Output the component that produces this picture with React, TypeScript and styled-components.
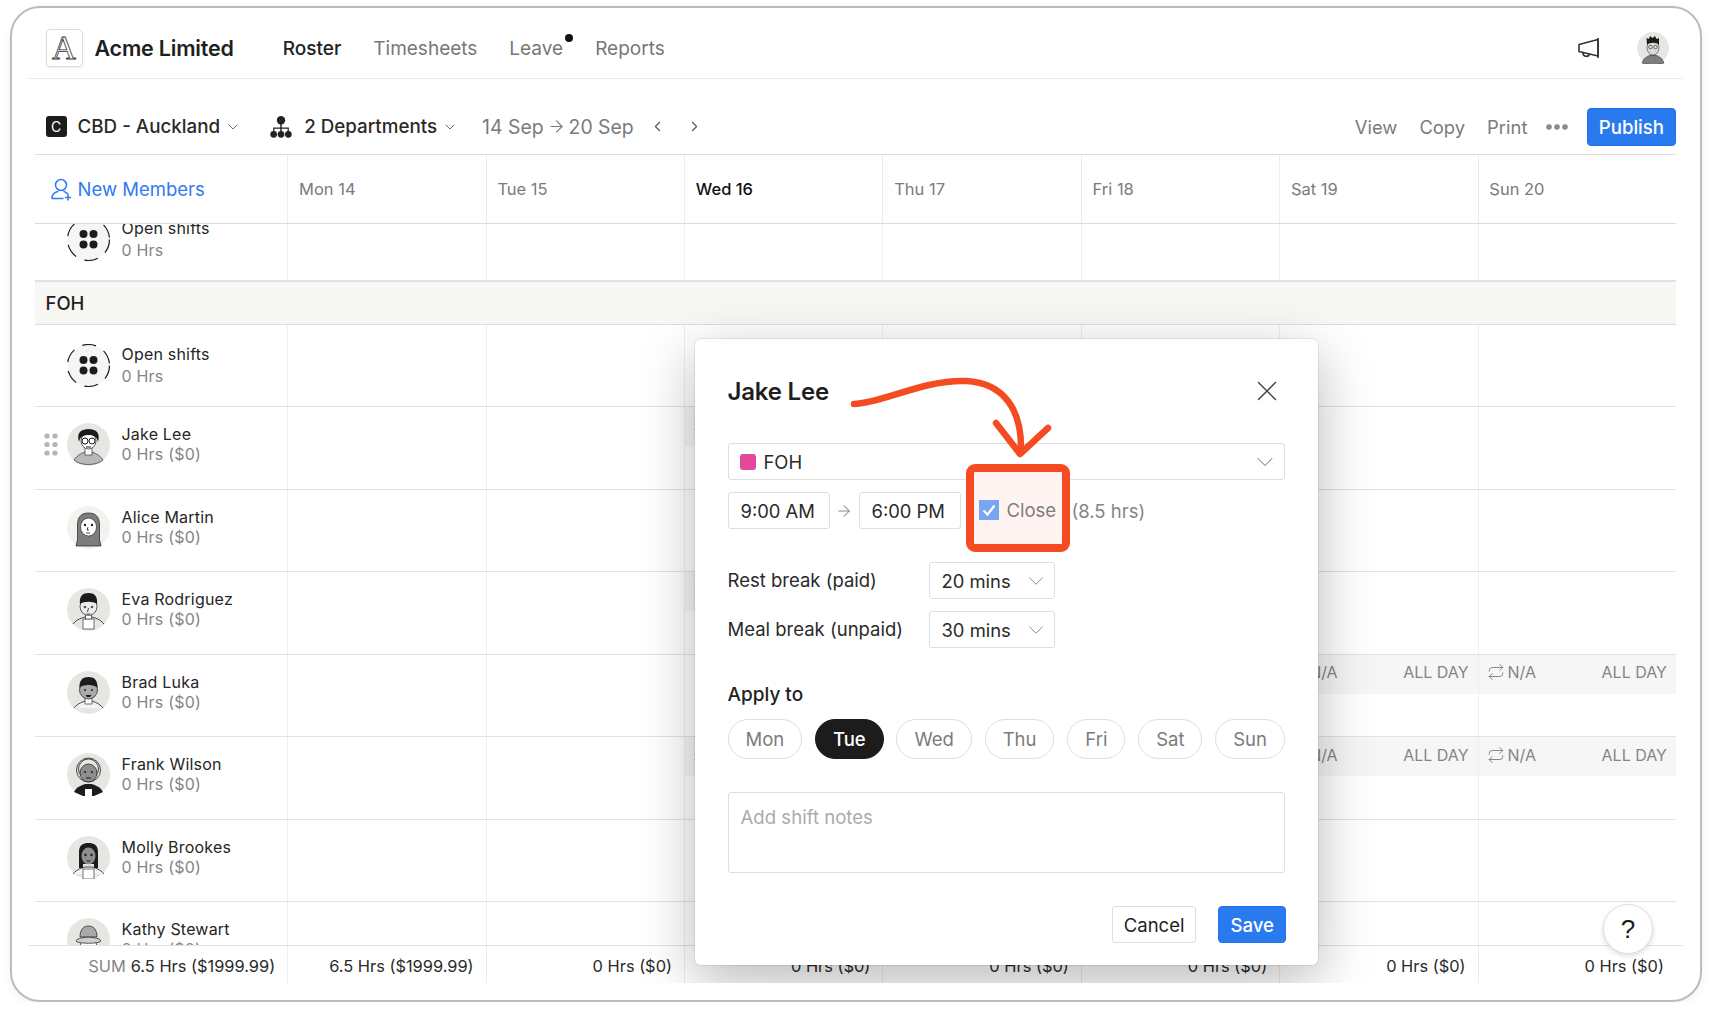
import React from 'react';
import styled, { createGlobalStyle } from 'styled-components';
import { ArrowRight, ChevronDown, ChevronLeft, ChevronRight, Repeat, X } from 'lucide-react';

const GLOBAL = createGlobalStyle`
  html, body { margin: 0; padding: 0; background: #fff; }
  body {
    font-family: Inter, "Liberation Sans", sans-serif;
    color: #1f1f1f;
    -webkit-font-smoothing: antialiased;
  }
  * { box-sizing: border-box; }
`;

const FIRST_COL = '252.7px';
const DAY_COL = '198.4px';

const FRAME = styled.div`
  position: relative;
  margin: 6px 0 0 10px;
  width: 1692px;
  height: 996px;
  border: 2.5px solid #bcbcbc;
  border-radius: 30px;
  background: #fff;
  box-shadow: 0 2px 8px rgba(0, 0, 0, 0.06);
`;
const VIEWPORT = styled.div`
  position: relative;
  display: flex;
  flex-direction: column;
  height: 975px;
  overflow: hidden;
  border-radius: 28px 28px 0 0;
`;
const HEADER = styled.header`
  flex: none;
  display: flex;
  align-items: center;
  height: 71px;
  margin: 0 17px 0 15.5px;
  padding: 10.5px 0 0 18px;
  border-bottom: 1px solid #ececec;
`;
const LOGO = styled.div`
  width: 37px;
  height: 38px;
  display: flex;
  align-items: center;
  justify-content: center;
  border: 1px solid #dcdcdc;
  border-radius: 4px;
  box-shadow: 0 1px 2px rgba(0, 0, 0, 0.08);
  font-family: "Liberation Serif", serif;
  font-size: 33px;
  color: #fff;
  -webkit-text-stroke: 0.8px #333;
`;
const BRAND = styled.div`
  margin-left: 12px;
  font-size: 21.5px;
  font-weight: 600;
  letter-spacing: -0.2px;
`;
const NAV = styled.nav`
  display: flex;
  gap: 32px;
  margin-left: 49px;
`;
const NAV_ITEM = styled.span<{ $active?: boolean }>`
  position: relative;
  font-size: 19px;
  font-weight: ${(p) => (p.$active ? 500 : 400)};
  color: ${(p) => (p.$active ? '#222' : '#777')};
`;
const NAV_DOT = styled.i`
  position: absolute;
  top: -3px;
  right: -10px;
  width: 8px;
  height: 8px;
  border-radius: 50%;
  background: #111;
`;
const HEADER_RIGHT = styled.div`
  margin-left: auto;
  display: flex;
  align-items: center;
  gap: 37px;
  padding-right: 14px;
`;
const ICON_SVG = styled.svg`
  display: block;
  flex: none;
`;

const TOOLBAR = styled.div`
  flex: none;
  display: flex;
  align-items: center;
  height: 75px;
  margin: 0 24px 0 22.5px;
  padding: 20px 0 0 11px;
`;
const TOOL_GROUP = styled.div<{ $gap?: number }>`
  display: flex;
  align-items: center;
  margin-left: ${(p) => p.$gap ?? 0}px;
`;
const LOCATION_BADGE = styled.span`
  width: 21px;
  height: 21px;
  margin-right: 11px;
  border-radius: 3px;
  background: #1c1c1c;
  color: #fff;
  font-size: 14px;
  display: flex;
  align-items: center;
  justify-content: center;
`;
const TOOL_LABEL = styled.span<{ $gap?: number }>`
  margin-left: ${(p) => p.$gap ?? 0}px;
  font-size: 18.8px;
  font-weight: 500;
  color: #2a2a2a;
`;
const TOOL_CHEVRON = styled(ChevronDown)`
  margin-left: 5px;
  color: #555;
`;
const PAGE_PREV = styled(ChevronLeft)`
  margin-left: 15px;
  color: #555;
`;
const PAGE_NEXT = styled(ChevronRight)`
  margin-left: 20px;
  color: #555;
`;
const DATE_LABEL = styled.span`
  display: flex;
  align-items: center;
  gap: 3px;
  font-size: 19.4px;
  color: #7b7b7b;
`;
const TOOL_LINK = styled.span`
  font-size: 18.4px;
  color: #7b7b7b;
`;
const TOOL_RIGHT = styled.div`
  margin-left: auto;
  display: flex;
  align-items: center;
  gap: 22px;
`;
const MORE_SLOT = styled.span`
  margin: 0 -3.3px;
`;
const PRIMARY_BUTTON = styled.button`
  height: 38px;
  padding: 0 11px;
  border: 1px solid #2271e8;
  border-radius: 4px;
  background: #2a7aef;
  color: #fff;
  font-family: inherit;
  font-size: 18.6px;
  font-weight: 500;
`;

const GRID_ROW = styled.div`
  display: grid;
  grid-template-columns: ${FIRST_COL} repeat(7, ${DAY_COL});
`;
const HEAD_ROW = styled(GRID_ROW)`
  flex: none;
  height: 70px;
  margin: 0 24px 0 22.5px;
  border-top: 1.5px solid #dcdcdc;
  border-bottom: 1.5px solid #dcdcdc;
`;
const NEW_MEMBERS = styled.div`
  display: flex;
  align-items: center;
  gap: 6px;
  padding-left: 16px;
  color: #2f7bf0;
  font-size: 18.5px;
`;
const DAY_HEAD = styled.div<{ $today?: boolean }>`
  display: flex;
  align-items: center;
  padding-left: 10.8px;
  border-left: 1px solid #ececec;
  font-size: 16.5px;
  font-weight: ${(p) => (p.$today ? 500 : 400)};
  color: ${(p) => (p.$today ? '#111' : '#7b7b7b')};
`;
const SCROLLER = styled.div`
  flex: 1;
  min-height: 0;
  overflow: hidden;
  margin: 0 24px 0 22.5px;
`;
const ROW = styled(GRID_ROW)<{ $clipped?: boolean }>`
  height: 82.5px;
  margin-top: ${(p) => (p.$clipped ? '-25.5px' : 0)};
  border-bottom: 1px solid #e2e2e2;
`;
const SECTION = styled.div`
  height: 43.5px;
  display: flex;
  align-items: center;
  padding: 1px 0 0 11px;
  background: #f7f7f3;
  border-top: 1px solid #e0e0dc;
  border-bottom: 1.5px solid #dcdcd8;
  font-size: 18.5px;
  font-weight: 500;
`;
const MEMBER = styled.div<{ $raised?: boolean }>`
  display: flex;
  align-items: center;
  padding-bottom: ${(p) => (p.$raised ? '6.5px' : 0)};
`;
const HANDLE_SLOT = styled.div`
  width: 32px;
  padding-left: 9px;
`;
const MEMBER_TEXT = styled.div<{ $open?: boolean }>`
  margin-left: 12px;
  display: flex;
  flex-direction: column;
  gap: ${(p) => (p.$open ? '3px' : '1px')};
`;
const MEMBER_NAME = styled.span`
  font-size: 16px;
  line-height: 19px;
  letter-spacing: 0.2px;
  color: #262626;
`;
const MEMBER_SUB = styled.span`
  font-size: 16px;
  line-height: 19px;
  letter-spacing: 0.2px;
  color: #858585;
`;
const DAY_CELL = styled.div`
  border-left: 1px solid #efefef;
`;
const SHIFT_BAND = styled.div`
  height: 39px;
  display: flex;
  align-items: center;
  gap: 3px;
  padding: 0 9px 4px 8px;
  background: #f6f6f6;
  font-size: 16px;
  color: #858585;
`;
const SHIFT_RIGHT = styled.span`
  margin-left: auto;
`;
const FOOTER = styled.div`
  flex: none;
  display: grid;
  grid-template-columns: 259.7px repeat(7, ${DAY_COL});
  height: 38.5px;
  margin: 0 17px 0 15.5px;
  border-top: 1px solid #e2e2e2;
`;
const FOOT_CELL = styled.div<{ $first?: boolean }>`
  display: flex;
  align-items: center;
  justify-content: flex-end;
  gap: 5px;
  padding: 3px 12px 0 0;
  border-left: ${(p) => (p.$first ? 'none' : '1px solid #ececec')};
  font-size: 16.4px;
  color: #2a2a2a;
`;
const SUM_LABEL = styled.span`
  color: #858585;
`;
const HELP_BUTTON = styled.button`
  position: absolute;
  left: 1591px;
  top: 896px;
  width: 50px;
  height: 50px;
  border: 1px solid #dedede;
  border-radius: 50%;
  background: #fff;
  box-shadow: 0 2px 5px rgba(0, 0, 0, 0.14);
  font-family: "Liberation Sans", sans-serif;
  font-size: 26px;
  color: #1a1a1a;
`;

const MODAL = styled.section`
  position: absolute;
  left: 682.5px;
  top: 331px;
  width: 623.5px;
  height: 626px;
  padding: 36px 33px 22px;
  border-radius: 6px;
  background: #fff;
  box-shadow: 0 0 0 1px rgba(0, 0, 0, 0.07), 0 16px 55px rgba(0, 0, 0, 0.28);
`;
const MODAL_HEAD = styled.div`
  display: flex;
  align-items: center;
  justify-content: space-between;
  height: 32px;
  padding-right: 1px;
`;
const MODAL_TITLE = styled.h2`
  margin: 0;
  font-size: 24px;
  font-weight: 600;
  letter-spacing: -0.2px;
  color: #1e1e1e;
`;
const FIELD = styled.div<{ $width?: number }>`
  display: flex;
  align-items: center;
  justify-content: space-between;
  width: ${(p) => (p.$width ? `${p.$width}px` : '100%')};
  height: 37px;
  padding: 0 12px;
  border: 1.5px solid #dedede;
  border-radius: 3px;
  background: #fff;
  font-size: 18.4px;
  color: #2a2a2a;
`;
const FIELD_CHEVRON = styled(ChevronDown)`
  margin-right: -7px;
  color: #888;
`;
const DEPT_FIELD = styled(FIELD)`
  margin-top: 36px;
`;
const DEPT_NAME = styled.span`
  display: flex;
  align-items: center;
  gap: 8px;
  margin-left: -1px;
`;
const SWATCH = styled.i`
  width: 16px;
  height: 16px;
  border-radius: 3px;
  background: #e4489b;
`;
const TIME_ROW = styled.div`
  display: flex;
  align-items: center;
  margin-top: 12px;
`;
const TIME_ARROW = styled.span`
  width: 29px;
  display: flex;
  justify-content: center;
  color: #8a8a8a;
`;
const DURATION = styled.span`
  margin-left: 111px;
  font-size: 18.5px;
  color: #858585;
`;
const HIGHLIGHT = styled.div`
  position: absolute;
  left: 271px;
  top: 125px;
  width: 104px;
  height: 88px;
  display: flex;
  align-items: center;
  gap: 8px;
  padding: 4px 5px 0 5px;
  border: 8px solid #f44b22;
  border-radius: 9px;
  background: #fff4f2;
  font-size: 18.5px;
  color: #7d7d7d;
`;
const CHECK_BOX = styled.span`
  flex: none;
  width: 20px;
  height: 20px;
  display: flex;
  align-items: center;
  justify-content: center;
  background: #7aa5ef;
`;
const SCRIBBLE = styled.svg`
  position: absolute;
  left: 150px;
  top: 32px;
  width: 215px;
  height: 95px;
  pointer-events: none;
`;
const BREAK_ROWS = styled.div`
  display: grid;
  grid-template-columns: 201px 126px;
  row-gap: 12px;
  align-items: center;
  margin-top: 33px;
`;
const BREAK_LABEL = styled.span`
  padding-bottom: 2px;
  font-size: 18.5px;
  color: #2a2a2a;
`;
const APPLY_LABEL = styled.div`
  margin-top: 35px;
  font-size: 19px;
  font-weight: 500;
  line-height: 24px;
  color: #222;
`;
const PILLS = styled.div`
  display: flex;
  justify-content: space-between;
  margin-top: 12px;
`;
const PILL = styled.button<{ $active?: boolean }>`
  height: 40px;
  padding: 0 17px;
  border: 1.5px solid ${(p) => (p.$active ? '#1c1c1c' : '#dedede')};
  border-radius: 20px;
  background: ${(p) => (p.$active ? '#1c1c1c' : '#fff')};
  color: ${(p) => (p.$active ? '#fff' : '#7b7b7b')};
  font-family: inherit;
  font-size: 18.5px;
  font-weight: ${(p) => (p.$active ? 500 : 400)};
`;
const NOTES = styled.div`
  height: 81px;
  margin-top: 33px;
  padding: 13px 12px;
  border: 1.5px solid #dedede;
  border-radius: 3px;
  font-size: 18.6px;
  color: #ababab;
`;
const ACTIONS = styled.div`
  display: flex;
  justify-content: flex-end;
  gap: 22px;
  margin: 33px -1px 0 0;
`;
const CANCEL_BUTTON = styled.button`
  height: 37px;
  padding: 0 11px;
  border: 1.5px solid #dedede;
  border-radius: 3px;
  background: #fff;
  color: #222;
  font-family: inherit;
  font-size: 18.5px;
`;
const SAVE_BUTTON = styled(PRIMARY_BUTTON)`
  height: 37px;
`;

const INK = '#1c1c1c';

function OpenAvatar() {
  return (
    <ICON_SVG width="43" height="43" viewBox="0 0 43 43">
      <circle cx="21.5" cy="21.5" r="21" fill="#f5f5f3" stroke={INK} strokeWidth="1.2" strokeDasharray="14 9" />
      <circle cx="16.5" cy="16" r="4" fill={INK} />
      <circle cx="26.5" cy="16" r="4" fill={INK} />
      <circle cx="16.5" cy="26.5" r="4" fill={INK} />
      <circle cx="26.5" cy="26.5" r="4" fill={INK} />
    </ICON_SVG>
  );
}

// hand drawn portraits, one per member
const PORTRAITS: Record<string, React.ReactNode> = {
  jake: (
    <>
      <path d="M7 37C11 31 16 30 18 29H25C27 30 32 31 36 37C30 43 13 43 7 37Z" fill="#b9b9b9" stroke={INK} strokeWidth=".6" />
      <rect x="18" y="24" width="7" height="8" fill="#fff" stroke={INK} strokeWidth=".6" />
      <ellipse cx="21.5" cy="18" rx="7.5" ry="8" fill="#fff" stroke={INK} strokeWidth=".7" />
      <path d="M12 19C9 9 15 6 21.5 6C28 6 34 9 31 19C30 14 27 12 21.5 12C16 12 13 14 12 19Z" fill={INK} />
      <circle cx="18" cy="18" r="3" fill="#fff" stroke={INK} />
      <circle cx="25" cy="18" r="3" fill="#fff" stroke={INK} />
      <path d="M19 24H24" stroke={INK} />
    </>
  ),
  alice: (
    <>
      <path d="M9 40L10.5 34V19C10.5 10 15 7 21.5 7C28 7 32.5 10 32.5 19V34L34 40Z" fill="#7d7d7d" stroke={INK} strokeWidth=".7" />
      <ellipse cx="21.5" cy="21" rx="8" ry="9" fill="#fff" stroke={INK} strokeWidth=".6" />
      <circle cx="18" cy="19" r="1.2" fill={INK} />
      <circle cx="25" cy="19" r="1.2" fill={INK} />
      <path d="M21 21L20 24H22M19 27H23" fill="none" stroke={INK} strokeWidth=".8" />
    </>
  ),
  eva: (
    <>
      <path d="M6 36C10 31 15 30 18 29H25C28 30 33 31 37 36" fill="none" stroke={INK} strokeWidth=".8" />
      <rect x="16" y="31" width="11" height="10" fill="#fff" stroke={INK} strokeWidth=".6" />
      <rect x="18.5" y="24" width="6" height="7" fill="#fff" stroke={INK} strokeWidth=".6" />
      <ellipse cx="21.5" cy="18.5" rx="8.5" ry="9" fill="#ededed" stroke={INK} strokeWidth=".7" />
      <path d="M13 16C12 8 16 5 21.5 5C27 5 31 8 30 16C26 13 17 13 13 16Z" fill={INK} />
      <circle cx="18" cy="19" r="1.3" fill="#555" />
      <circle cx="25" cy="19" r="1.3" fill="#555" />
      <path d="M21.5 20L20.5 24M19.5 26H23.5" stroke={INK} strokeWidth=".8" />
    </>
  ),
  brad: (
    <>
      <path d="M7 37C11 32 16 31 18 30H25C27 31 32 32 36 37" fill="#f4f4f4" stroke={INK} strokeWidth=".8" />
      <rect x="18" y="25" width="7" height="8" fill="#fff" stroke={INK} strokeWidth=".6" />
      <ellipse cx="21.5" cy="19" rx="9" ry="9" fill="#a9a9a9" stroke={INK} strokeWidth=".7" />
      <path d="M12.5 17C12 9 16 6 21.5 6C27 6 31 9 30.5 17C28 13 15 13 12.5 17Z" fill={INK} />
      <circle cx="18" cy="19" r="1" fill={INK} />
      <circle cx="25" cy="19" r="1" fill={INK} />
      <path d="M18.5 24H24.5L23 26H20Z" fill={INK} />
    </>
  ),
  frank: (
    <>
      <path d="M7 39C10 33 16 32 18 31H25C27 32 33 33 36 39L27 43H16Z" fill={INK} />
      <rect x="18" y="36" width="7" height="7" fill="#fff" />
      <circle cx="21.5" cy="17" r="12" fill="#e6e6e2" stroke={INK} strokeWidth=".8" />
      <circle cx="21.5" cy="16" r="10" fill="none" stroke={INK} strokeWidth=".8" />
      <ellipse cx="21.5" cy="20" rx="8.5" ry="9" fill="#8e8e8e" stroke={INK} strokeWidth=".7" />
      <circle cx="18" cy="19" r="1" fill={INK} />
      <circle cx="25" cy="19" r="1" fill={INK} />
      <path d="M19 25H24" stroke={INK} />
    </>
  ),
  molly: (
    <>
      <path d="M6 38C10 33 15 32 18 31H25C28 32 33 33 37 38" fill="#f4f4f4" stroke={INK} strokeWidth=".8" />
      <rect x="16" y="33" width="11" height="10" fill="#fff" stroke={INK} strokeWidth=".6" />
      <path d="M12 32V16C12 9 16 7 21.5 7C27 7 31 9 31 16V32H27V28H16V32Z" fill={INK} />
      <ellipse cx="21.5" cy="20" rx="7" ry="8.5" fill="#8e8e8e" />
      <circle cx="18.5" cy="19" r="1.2" fill={INK} />
      <circle cx="24.5" cy="19" r="1.2" fill={INK} />
      <path d="M19.5 25H23.5" stroke={INK} />
    </>
  ),
  kathy: (
    <>
      <ellipse cx="21.5" cy="27" rx="8" ry="9" fill="#fff" stroke={INK} strokeWidth=".7" />
      <path d="M13 19C13 11 17 8 21.5 8C26 8 30 11 30 19Z" fill="#a9a9a9" stroke={INK} strokeWidth=".7" />
      <path d="M9 23C10 18 33 18 34 23C33 26 10 26 9 23Z" fill="#cfcfcf" stroke={INK} strokeWidth=".7" />
      <circle cx="18" cy="29" r="1.4" fill={INK} />
      <circle cx="25" cy="29" r="1.4" fill={INK} />
    </>
  ),
};

const MEMBERS = [
  { key: 'jake', name: 'Jake Lee', handle: true, band: [2], strip: [2] },
  { key: 'alice', name: 'Alice Martin', handle: false, band: [], strip: [] },
  { key: 'eva', name: 'Eva Rodriguez', handle: false, band: [2], strip: [2] },
  { key: 'brad', name: 'Brad Luka', handle: false, band: [5, 6], strip: [] },
  { key: 'frank', name: 'Frank Wilson', handle: false, band: [2, 5, 6], strip: [2] },
  { key: 'molly', name: 'Molly Brookes', handle: false, band: [], strip: [] },
  { key: 'kathy', name: 'Kathy Stewart', handle: false, band: [], strip: [] },
];
const DAYS = ['Mon 14', 'Tue 15', 'Wed 16', 'Thu 17', 'Fri 18', 'Sat 19', 'Sun 20'];
const PILL_DAYS = ['Mon', 'Tue', 'Wed', 'Thu', 'Fri', 'Sat', 'Sun'];
const FOOT_TOTALS = ['6.5 Hrs ($1999.99)', '0 Hrs ($0)', '0 Hrs ($0)', '0 Hrs ($0)', '0 Hrs ($0)', '0 Hrs ($0)', '0 Hrs ($0)'];

function Portrait({ who }: { who: string }) {
  return (
    <ICON_SVG width="43" height="43" viewBox="0 0 43 43" style={{ overflow: 'hidden' }}>
      <circle cx="21.5" cy="21.5" r="21.5" fill={who === 'alice' ? '#f2f2ee' : '#e6e6e2'} />
      {PORTRAITS[who]}
    </ICON_SVG>
  );
}

function DragDots() {
  return (
    <ICON_SVG width="14" height="23" viewBox="0 0 14 23" fill="#b4b4b4">
      {[3, 11.5, 20].map((y) => (
        <React.Fragment key={y}>
          <circle cx="3" cy={y} r="2.6" />
          <circle cx="11" cy={y} r="2.6" />
        </React.Fragment>
      ))}
    </ICON_SVG>
  );
}

function Megaphone() {
  return (
    <ICON_SVG width="24" height="24" viewBox="0 0 24 24" fill="none" stroke="#333" strokeWidth="1.6" strokeLinejoin="round">
      <path d="M3 8.5V15.5L22 20V3.5Z" />
      <path d="M22 2V22M7 17C7 21 12.5 21.5 13.5 18" />
    </ICON_SVG>
  );
}

function DepartmentIcon() {
  return (
    <ICON_SVG width="22" height="22" viewBox="0 0 21 21" fill="#222">
      <circle cx="10.5" cy="4" r="4" />
      <path d="M9.8 7H11.2V11H18V15H16.8V12.2H11.2V15H9.8V12.2H4.2V15H3V11H9.8Z" />
      <circle cx="3.5" cy="17.5" r="3.2" />
      <circle cx="10.5" cy="17.5" r="3.2" />
      <circle cx="17.5" cy="17.5" r="3.2" />
    </ICON_SVG>
  );
}

function NewMemberIcon() {
  return (
    <ICON_SVG width="21" height="23" viewBox="0 0 21 23" fill="none" stroke="#2f7bf0" strokeWidth="1.5" strokeLinecap="round">
      <circle cx="10" cy="7" r="5.5" />
      <path d="M1 20.5C1 16 4 14 7 13.5M13 13.5C14.5 14 16 15 16.8 16M1 20.5H12M17 17V22M14.5 19.5H19.5" />
    </ICON_SVG>
  );
}

function MoreDots() {
  return (
    <MORE_SLOT>
      <ICON_SVG width="22" height="6" viewBox="0 0 22 6" fill="#8a8a8a">
        <circle cx="3" cy="3" r="2.8" />
        <circle cx="11" cy="3" r="2.8" />
        <circle cx="19" cy="3" r="2.8" />
      </ICON_SVG>
    </MORE_SLOT>
  );
}

function UserAvatar() {
  return (
    <ICON_SVG width="32" height="32" viewBox="0 0 32 32">
      <circle cx="16" cy="16" r="16" fill="#e6e6e2" />
      <path d="M5 31C7 25 12 24 13 23H19C20 24 25 25 27 31C22 33 10 33 5 31Z" fill="#7d7d7d" stroke={INK} strokeWidth=".5" />
      <ellipse cx="16" cy="15.5" rx="6" ry="7.5" fill="#dcdcdc" stroke={INK} strokeWidth=".5" />
      <path d="M10 13L9.5 6L12 7L13 4L15.5 6L18 4L19.5 7L22 6L22 13C20 10 12 10 10 13Z" fill={INK} />
      <circle cx="13.5" cy="15" r="1.8" fill="none" stroke={INK} strokeWidth=".6" />
      <circle cx="18.5" cy="15" r="1.8" fill="none" stroke={INK} strokeWidth=".6" />
    </ICON_SVG>
  );
}

function ShiftCell({ iconOnly }: { iconOnly: boolean }) {
  return (
    <SHIFT_BAND>
      <Repeat size={18} strokeWidth={1.3} />
      {!iconOnly && (
        <>
          <span>N/A</span>
          <SHIFT_RIGHT>ALL DAY</SHIFT_RIGHT>
        </>
      )}
    </SHIFT_BAND>
  );
}

function EmptyDays({ band = [], strip = [] }: { band?: number[]; strip?: number[] }) {
  return (
    <>
      {DAYS.map((day, i) => (
        <DAY_CELL key={day}>{band.includes(i) && <ShiftCell iconOnly={strip.includes(i)} />}</DAY_CELL>
      ))}
    </>
  );
}

function OpenRow({ clipped }: { clipped?: boolean }) {
  return (
    <ROW $clipped={clipped}>
      <MEMBER>
        <HANDLE_SLOT />
        <OpenAvatar />
        <MEMBER_TEXT $open>
          <MEMBER_NAME>Open shifts</MEMBER_NAME>
          <MEMBER_SUB>0 Hrs</MEMBER_SUB>
        </MEMBER_TEXT>
      </MEMBER>
      <EmptyDays />
    </ROW>
  );
}

function ShiftModal() {
  return (
    <MODAL>
      <MODAL_HEAD>
        <MODAL_TITLE>Jake Lee</MODAL_TITLE>
        <X size={34} strokeWidth={1} color="#444" />
      </MODAL_HEAD>
      <DEPT_FIELD>
        <DEPT_NAME>
          <SWATCH />
          FOH
        </DEPT_NAME>
        <FIELD_CHEVRON size={28} strokeWidth={0.9} />
      </DEPT_FIELD>
      <TIME_ROW>
        <FIELD $width={102}>9:00 AM</FIELD>
        <TIME_ARROW>
          <ArrowRight size={18} strokeWidth={1.4} />
        </TIME_ARROW>
        <FIELD $width={102}>6:00 PM</FIELD>
        <DURATION>(8.5 hrs)</DURATION>
      </TIME_ROW>
      <BREAK_ROWS>
        <BREAK_LABEL>Rest break (paid)</BREAK_LABEL>
        <FIELD>
          20 mins
          <FIELD_CHEVRON size={26} strokeWidth={0.9} />
        </FIELD>
        <BREAK_LABEL>Meal break (unpaid)</BREAK_LABEL>
        <FIELD>
          30 mins
          <FIELD_CHEVRON size={26} strokeWidth={0.9} />
        </FIELD>
      </BREAK_ROWS>
      <APPLY_LABEL>Apply to</APPLY_LABEL>
      <PILLS>
        {PILL_DAYS.map((day) => (
          <PILL key={day} $active={day === 'Tue'}>
            {day}
          </PILL>
        ))}
      </PILLS>
      <NOTES>Add shift notes</NOTES>
      <ACTIONS>
        <CANCEL_BUTTON>Cancel</CANCEL_BUTTON>
        <SAVE_BUTTON>Save</SAVE_BUTTON>
      </ACTIONS>

      <HIGHLIGHT>
        <CHECK_BOX>
          <ICON_SVG width="16" height="16" viewBox="0 0 16 16" fill="none" stroke="#fff" strokeWidth="2.2">
            <path d="M2.5 8.5L6.5 12.5L13.5 3.5" />
          </ICON_SVG>
        </CHECK_BOX>
        Close
      </HIGHLIGHT>
      <SCRIBBLE viewBox="845 370 215 95" fill="none" stroke="#f44b22" strokeWidth="6.5" strokeLinecap="round" strokeLinejoin="round">
        <path d="M854 403C880 403 925 378 966 380C1005 382 1022 410 1021 450" />
        <path d="M996 422L1020 453L1048 427" />
      </SCRIBBLE>
    </MODAL>
  );
}

export default function App() {
  return (
    <>
      <GLOBAL />
      <FRAME>
        <VIEWPORT>
          <HEADER>
            <LOGO>A</LOGO>
            <BRAND>Acme Limited</BRAND>
            <NAV>
              <NAV_ITEM $active>Roster</NAV_ITEM>
              <NAV_ITEM>Timesheets</NAV_ITEM>
              <NAV_ITEM>
                Leave
                <NAV_DOT />
              </NAV_ITEM>
              <NAV_ITEM>Reports</NAV_ITEM>
            </NAV>
            <HEADER_RIGHT>
              <Megaphone />
              <UserAvatar />
            </HEADER_RIGHT>
          </HEADER>

          <TOOLBAR>
            <TOOL_GROUP>
              <LOCATION_BADGE>C</LOCATION_BADGE>
              <TOOL_LABEL>CBD - Auckland</TOOL_LABEL>
              <TOOL_CHEVRON size={16} strokeWidth={1.3} />
            </TOOL_GROUP>
            <TOOL_GROUP $gap={29}>
              <DepartmentIcon />
              <TOOL_LABEL $gap={12}>2 Departments</TOOL_LABEL>
              <TOOL_CHEVRON size={16} strokeWidth={1.3} />
            </TOOL_GROUP>
            <TOOL_GROUP $gap={24}>
              <DATE_LABEL>
                14 Sep
                <ArrowRight size={19} strokeWidth={1.4} />
                20 Sep
              </DATE_LABEL>
              <PAGE_PREV size={17} strokeWidth={1.5} />
              <PAGE_NEXT size={17} strokeWidth={1.5} />
            </TOOL_GROUP>
            <TOOL_RIGHT>
              <TOOL_LINK>View</TOOL_LINK>
              <TOOL_LINK>Copy</TOOL_LINK>
              <TOOL_LINK>Print</TOOL_LINK>
              <MoreDots />
              <PRIMARY_BUTTON>Publish</PRIMARY_BUTTON>
            </TOOL_RIGHT>
          </TOOLBAR>

          <HEAD_ROW>
            <NEW_MEMBERS>
              <NewMemberIcon />
              New Members
            </NEW_MEMBERS>
            {DAYS.map((day) => (
              <DAY_HEAD key={day} $today={day === 'Wed 16'}>
                {day}
              </DAY_HEAD>
            ))}
          </HEAD_ROW>

          <SCROLLER>
            <OpenRow clipped />
            <SECTION>FOH</SECTION>
            <OpenRow />
            {MEMBERS.map((m) => (
              <ROW key={m.key}>
                <MEMBER $raised>
                  <HANDLE_SLOT>{m.handle && <DragDots />}</HANDLE_SLOT>
                  <Portrait who={m.key} />
                  <MEMBER_TEXT>
                    <MEMBER_NAME>{m.name}</MEMBER_NAME>
                    <MEMBER_SUB>0 Hrs ($0)</MEMBER_SUB>
                  </MEMBER_TEXT>
                </MEMBER>
                <EmptyDays band={m.band} strip={m.strip} />
              </ROW>
            ))}
          </SCROLLER>

          <FOOTER>
            <FOOT_CELL $first>
              <SUM_LABEL>SUM</SUM_LABEL>
              6.5 Hrs ($1999.99)
            </FOOT_CELL>
            {FOOT_TOTALS.map((total, i) => (
              <FOOT_CELL key={i}>{total}</FOOT_CELL>
            ))}
          </FOOTER>

          <ShiftModal />
          <HELP_BUTTON>?</HELP_BUTTON>
        </VIEWPORT>
      </FRAME>
    </>
  );
}
